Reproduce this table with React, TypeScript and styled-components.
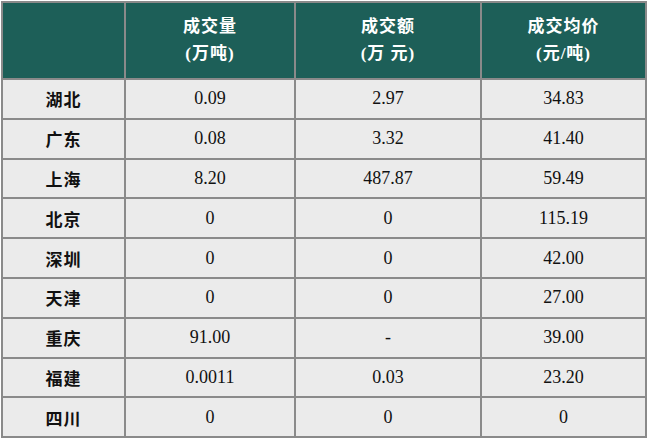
import React from "react";
import styled, { createGlobalStyle } from "styled-components";

const Global = createGlobalStyle`
  html, body { margin: 0; padding: 0; background: #ffffff; }
  body { font-family: "Liberation Serif", "Noto Sans CJK SC", serif; }
`;

const Wrap = styled.div`
  padding: 1px 0 0 1px;
`;

const Table = styled.table`
  width: 644px;
  table-layout: fixed;
  border-collapse: collapse;
  border: 2px solid #8a8a8a;
`;

const HeadRow = styled.tr`
  height: 77px;
  background: #1d5f58;
`;

const Row = styled.tr`
  height: 39.8px;
  background: #ebebeb;
`;

const HeadCell = styled.th`
  border: 2px solid #8a8a8a;
  color: #ffffff;
  font-family: "Liberation Serif", "Noto Sans CJK SC", serif;
  font-weight: 700;
  font-size: 17px;
  line-height: 27px;
  letter-spacing: 1px;
  text-align: center;
  vertical-align: middle;
  padding: 0 0 2px;
`;

const Cell = styled.td<{ $label?: boolean }>`
  border: 2px solid #8a8a8a;
  color: #111111;
  font-family: "Liberation Serif", "Noto Sans CJK SC", serif;
  font-size: ${(p) => (p.$label ? "17px" : "18px")};
  font-weight: ${(p) => (p.$label ? 700 : 400)};
  letter-spacing: ${(p) => (p.$label ? "1px" : "0")};
  text-align: center;
  vertical-align: middle;
  padding: 0;
`;

const cols = [123, 170, 186, 165];

const headers: [string, string][] = [
  ["成交量", "(万吨)"],
  ["成交额", "(万 元)"],
  ["成交均价", "(元/吨)"],
];

const rows: [string, string, string, string][] = [
  ["湖北", "0.09", "2.97", "34.83"],
  ["广东", "0.08", "3.32", "41.40"],
  ["上海", "8.20", "487.87", "59.49"],
  ["北京", "0", "0", "115.19"],
  ["深圳", "0", "0", "42.00"],
  ["天津", "0", "0", "27.00"],
  ["重庆", "91.00", "-", "39.00"],
  ["福建", "0.0011", "0.03", "23.20"],
  ["四川", "0", "0", "0"],
];

export default function App() {
  return (
    <>
      <Global />
      <Wrap>
        <Table>
          <colgroup>
            {cols.map((w, i) => (
              <col key={i} style={{ width: w }} />
            ))}
          </colgroup>
          <thead>
            <HeadRow>
              <HeadCell />
              {headers.map(([a, b]) => (
                <HeadCell key={a}>
                  {a}
                  <br />
                  {b}
                </HeadCell>
              ))}
            </HeadRow>
          </thead>
          <tbody>
            {rows.map((r) => (
              <Row key={r[0]}>
                <Cell $label>{r[0]}</Cell>
                <Cell>{r[1]}</Cell>
                <Cell>{r[2]}</Cell>
                <Cell>{r[3]}</Cell>
              </Row>
            ))}
          </tbody>
        </Table>
      </Wrap>
    </>
  );
}
